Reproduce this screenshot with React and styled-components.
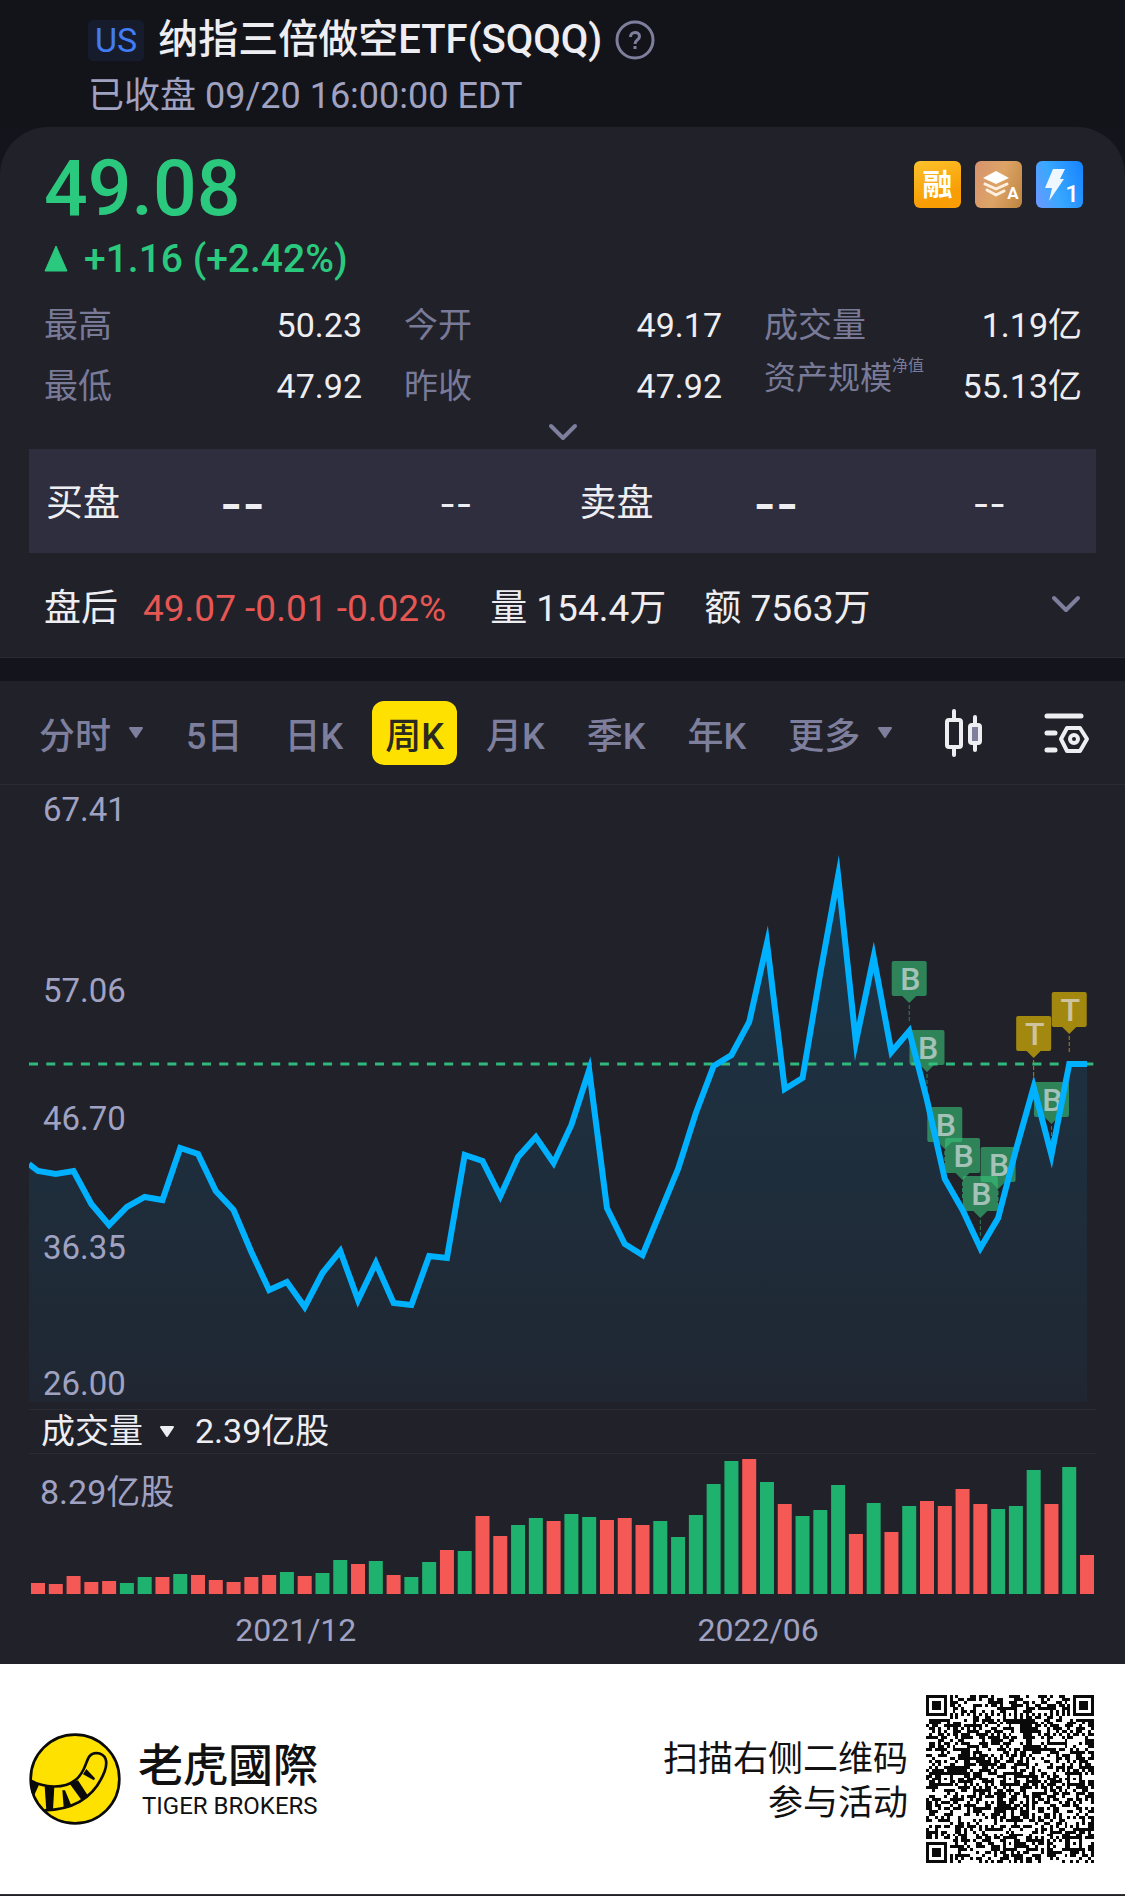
import React, { useState } from 'react';
import styled, { createGlobalStyle } from 'styled-components';

const GlobalStyle = createGlobalStyle`
    * {
        box-sizing: border-box;
    }

    body {
        margin: 0;
        background-color: #21212a;
        font-family: Roboto, "Noto Sans CJK SC", sans-serif;
        color: #eeeef2;
    }

    button {
        padding: 0;
        border: none;
        background: none;
        color: inherit;
        font: inherit;
        cursor: pointer;
    }

    svg {
        display: block;
    }
`;

const Page = styled.div`
    background-color: #14141c;
`;

const Header = styled.header`
    padding: 15px 88px 9px;
    background-color: #131419;
`;

const TitleRow = styled.div`
    display: flex;
    align-items: center;
    height: 50px;
`;

const Market = styled.span`
    padding: 0 7px;
    border-radius: 5px;
    background-color: #171c2d;
    color: #427cf5;
    font-size: 34px;
    line-height: 41px;
`;

const Title = styled.h1`
    margin: 0 13px 0 14px;
    font-size: 40px;
    font-weight: 500;
    line-height: 50px;
`;

const Status = styled.p`
    margin: 9px 0 0;
    color: #a0a2c2;
    font-size: 36px;
    line-height: 44px;
`;

const QuoteCard = styled.section`
    padding-top: 22px;
    border-bottom: 1px solid #2b2b36;
    border-radius: 48px 48px 0 0;
    background-color: #21212a;
`;

const PriceRow = styled.div`
    display: flex;
    justify-content: space-between;
    align-items: flex-start;
    padding: 0 42px 0 44px;
`;

const Price = styled.div`
    color: #2bc97e;
    font-size: 77px;
    font-weight: 500;
    line-height: 80px;
`;

const Badges = styled.div`
    display: flex;
    gap: 14px;
    margin-top: 12px;
`;

const Badge = styled.button`
    width: 47px;
    height: 47px;
    border-radius: 6px;
    background: ${props => props.$fill};
    color: white;
    font-size: 30px;
    font-weight: 700;
    line-height: 47px;
    overflow: hidden;
`;

const Change = styled.div`
    display: flex;
    align-items: center;
    gap: 16px;
    margin-top: 6px;
    padding: 0 44px;
    color: #2bc97e;
    font-size: 39px;
    font-weight: 500;
    line-height: 48px;
`;

const Stats = styled.dl`
    display: grid;
    grid-template-columns: repeat(3, 1fr);
    column-gap: 42px;
    margin: 12px 0 0;
    padding: 0 43px 0 44px;
`;

const Stat = styled.div`
    display: flex;
    justify-content: space-between;
    font-size: 34px;
    line-height: 61px;
    white-space: nowrap;

    dt {
        color: #787a98;
    }

    dd {
        margin: 0;
    }
`;

const SmallTerm = styled.dt`
    display: flex;
    align-items: flex-start;
    font-size: 32px;
    line-height: 44px;

    sup {
        font-size: 16px;
        line-height: 20px;
    }
`;

const ExpandBtn = styled.button`
    display: flex;
    justify-content: center;
    align-items: center;
    width: 100%;
    height: 32px;
`;

const Depth = styled.div`
    display: grid;
    grid-template-columns: 1fr 1fr;
    margin: 0 29px;
    padding-top: 6px;
    background-color: #2e2e3e;
`;

const DepthSide = styled.div`
    display: grid;
    grid-template-columns: 1fr 2fr 2fr;
    font-size: 37px;
    line-height: 98px;
    text-align: center;

    span:first-child {
        padding-left: 17px;
        text-align: left;
        white-space: nowrap;
    }
`;

const Dashes = styled.span`
    font-family: Inter, sans-serif;
    font-size: ${props => props.$strong ? '48px' : '36px'};
    font-weight: ${props => props.$strong ? 600 : 400};
`;

const AfterHours = styled.div`
    display: flex;
    align-items: center;
    padding: 0 44px;
    font-size: 37px;
    line-height: 97px;
`;

const AfterText = styled.span`
    padding-top: 7px;
    margin-right: ${props => props.$gap};
    color: ${props => props.$loss ? '#e65754' : 'inherit'};
    white-space: nowrap;
`;

const AfterToggle = styled.button`
    margin-left: auto;
`;

const Divider = styled.div`
    height: 23px;
`;

const ChartCard = styled.section`
    background-color: #21212a;
`;

const Toolbar = styled.nav`
    display: flex;
    align-items: center;
    gap: 16px;
    height: 104px;
    padding: 0 34px 0 26px;
    border-bottom: 1px solid #2b2b36;
`;

const Tab = styled.button`
    display: flex;
    align-items: center;
    gap: 17px;
    height: 64px;
    padding: 0 13px;
    border-radius: 12px;
    background-color: ${props => props.$active ? '#ffe100' : 'transparent'};
    color: ${props => props.$active ? '#2a2a20' : '#7d7f9d'};
    font-size: 36px;
    font-weight: 500;
    white-space: nowrap;
`;

const Tools = styled.div`
    display: flex;
    justify-content: space-between;
    flex: 1;
    padding-left: 22px;
`;

const Plot = styled.div`
    margin: 0 29px;

    svg {
        width: 100%;
        height: auto;
    }
`;

const VolumeHead = styled.div`
    display: flex;
    align-items: center;
    gap: 20px;
    height: 45px;
    margin: 0 29px;
    padding-left: 12px;
    border-top: 1px solid #2b2b36;
    border-bottom: 1px solid #2b2b36;
    font-size: 34px;
    line-height: 43px;
`;

const VolumeSelect = styled.button`
    display: flex;
    align-items: center;
    gap: 16px;
`;

const Dates = styled.div`
    display: grid;
    grid-template-columns: repeat(60, 1fr);
    margin: 0 29px;
    padding-top: 2px;
    color: #a0a2c2;
    font-size: 32px;
    line-height: 68px;
    text-align: center;
`;

const DateTick = styled.span`
    grid-column: ${props => props.$start} / span 10;
`;

const Footer = styled.footer`
    display: flex;
    justify-content: space-between;
    align-items: center;
    padding: 31px 31px 31px 29px;
    border-bottom: 1px solid #333336;
    background-color: white;
    color: #111111;
`;

const Brand = styled.div`
    display: flex;
    align-items: center;
    gap: 17px;
`;

const BrandText = styled.div`
    padding-top: 4px;
`;

const BrandName = styled.div`
    font-family: Roboto, "Noto Sans CJK TC", sans-serif;
    font-size: 45px;
    font-weight: 500;
    line-height: 50px;
`;

const BrandLatin = styled.div`
    padding-left: 4px;
    font-size: 24px;
    line-height: 28px;
`;

const Invite = styled.div`
    display: flex;
    align-items: center;
    gap: 18px;
    font-size: 35px;
    line-height: 44px;
    text-align: right;
`;

const InviteText = styled.p`
    margin: 0;
    padding-top: 5px;
`;

const stats = [
    { label: '最高', value: '50.23' },
    { label: '今开', value: '49.17' },
    { label: '成交量', value: '1.19亿' },
    { label: '最低', value: '47.92' },
    { label: '昨收', value: '47.92' },
    { label: '资产规模', note: '净值', value: '55.13亿' },
];

const tabs = ['分时', '5日', '日K', '周K', '月K', '季K', '年K', '更多'];
const menus = ['分时', '更多'];

const priceLabels = [
    { y: 24, text: '67.41' },
    { y: 205, text: '57.06' },
    { y: 333, text: '46.70' },
    { y: 462, text: '36.35' },
    { y: 598, text: '26.00' },
];

const closes = [
    386, 389, 386, 419, 440, 422, 412, 415, 363, 369, 406, 425, 467, 505, 497,
    522, 488, 466, 515, 478, 518, 520, 471, 473, 370, 376, 411, 372, 352, 378,
    340, 285, 423, 459, 470, 427, 384, 328, 281, 270, 237, 158, 304, 293, 188,
    91, 257, 172, 267, 246, 315, 394, 425, 463, 433, 365, 302, 370, 279, 279,
];

const marks = [
    { week: 49, y: 218, type: 'B' },
    { week: 50, y: 287, type: 'B' },
    { week: 51, y: 364, type: 'B' },
    { week: 52, y: 395, type: 'B' },
    { week: 54, y: 404, type: 'B' },
    { week: 53, y: 433, type: 'B' },
    { week: 56, y: 273, type: 'T' },
    { week: 57, y: 339, type: 'B' },
    { week: 58, y: 249, type: 'T' },
];

const volumes = [
    11, 10, 18, 12, 13, 11, 17, 17, 20, 19, 14, 12, 17, 19, 22,
    18, 21, 34, 30, 33, 19, 17, 32, 44, 43, 78, 58, 69, 76, 73,
    80, 77, 74, 76, 69, 73, 57, 79, 110, 133, 135, 112, 90, 78, 84,
    109, 60, 91, 62, 88, 93, 88, 105, 90, 85, 88, 124, 90, 127, 39,
];
const volumeSides = 'rrrrrggrgrrrrrgrggrgrggrgrrggrggrrrgggggrgrgggrgrgrrrrgggrgr';

const weekX = i => 9 + i * 17.78;

const Chevron = () => (
    <svg width="30" height="20" viewBox="0 0 30 20" fill="none" stroke="#7d7f9d" strokeWidth="4" strokeLinecap="round" strokeLinejoin="round">
        <path d="M3 3 L15 15 L27 3" />
    </svg>
);

const Triangle = ({ color }) => (
    <svg width="16" height="12" viewBox="0 0 16 12">
        <path d="M2 1 H14 L8 10 Z" fill={color} stroke={color} strokeWidth="2" strokeLinejoin="round" />
    </svg>
);

const PriceChart = () => {
    const points = closes.map((y, i) => `${weekX(i)},${y}`).join(' ');
    return (
        <svg viewBox="0 0 1067 624" role="img" aria-label="周K">
            <defs>
                <linearGradient id="area" x1="0" y1="0" x2="0" y2="1">
                    <stop offset="0" stopColor="#00b4ff" stopOpacity="0.14" />
                    <stop offset="1" stopColor="#00b4ff" stopOpacity="0.04" />
                </linearGradient>
            </defs>
            <polygon points={`0,617 0,379 ${points} ${weekX(59)},617`} fill="url(#area)" />
            <line x1="0" x2="1065" y1="279" y2="279" stroke="#2fb97d" strokeWidth="3" strokeDasharray="9 8.3" />
            {marks.map(mark => (
                <g key={mark.week} transform={`translate(${weekX(mark.week)} ${mark.y})`}>
                    <path
                        d="M-15.500 -42 H15.500 Q17.500 -42 17.500 -40 V-9 Q17.500 -7 15.500 -7 H7 L0 0 L-7 -7 H-15.500 Q-17.500 -7 -17.500 -9 V-40 Q-17.500 -42 -15.500 -42 Z"
                        fill={mark.type === 'B' ? '#37c47a' : '#facd00'}
                        opacity="0.6"
                    />
                    <line y1="2" y2="20" stroke={mark.type === 'B' ? '#2e835a' : '#a38810'} strokeDasharray="4 2" />
                    <text x="1" y="-13" fontSize="32" fontWeight="500" fill="#e4e4ec" opacity="0.65" textAnchor="middle">{mark.type}</text>
                </g>
            ))}
            <polyline points={`0,379 ${points}`} fill="none" stroke="#00b1ff" strokeWidth="6" strokeMiterlimit="20" />
            {priceLabels.map(label => (
                <text key={label.text} x="14" y={label.y + 12} fontSize="33" fill="#a0a2c2">{label.text}</text>
            ))}
        </svg>
    );
};

const VolumeChart = () => (
    <svg viewBox="0 0 1067 140" role="img" aria-label="成交量">
        {volumes.map((height, i) => (
            <rect
                key={i}
                x={weekX(i) - 7}
                y={140 - height}
                width="14"
                height={height}
                fill={volumeSides[i] === 'g' ? '#1fb16e' : '#f45956'}
            />
        ))}
        <text x="11" y="50" fontSize="34" fill="#a0a2c2">8.29亿股</text>
    </svg>
);

const QR_SIZE = 57;

const inBox = (x, y, left, top, size) => x >= left && x < left + size && y >= top && y < top + size;

// concentric squares around a centre: finder (radius 3) or alignment (radius 2)
const ring = (x, y, cx, cy) => Math.max(Math.abs(x - cx), Math.abs(y - cy));

const qrModules = () => {
    let seed = 20220920;
    let path = '';
    const finders = [[3, 3], [QR_SIZE - 4, 3], [3, QR_SIZE - 4]];
    const aligns = [[28, 6], [6, 28], [28, 28], [50, 28], [28, 50], [50, 50]];
    for (let y = 0; y < QR_SIZE; y++) {
        for (let x = 0; x < QR_SIZE; x++) {
            seed = (seed * 1103515245 + 12345) % 2147483648;
            let dark = seed / 2147483648 < 0.5;
            if (x === 6 || y === 6) dark = (x + y) % 2 === 0;
            aligns.forEach(([cx, cy]) => {
                if (ring(x, y, cx, cy) <= 2) dark = ring(x, y, cx, cy) !== 1;
            });
            finders.forEach(([cx, cy]) => {
                if (inBox(x, y, cx - 4, cy - 4, 9)) dark = ring(x, y, cx, cy) < 2 || ring(x, y, cx, cy) === 3;
            });
            if (dark) path += `M${x} ${y}h1v1h-1z`;
        }
    }
    return path;
};

const qrPath = qrModules();

const TigerLogo = () => (
    <svg width="92" height="92" viewBox="0 0 276 276">
        <circle cx="138" cy="138" r="133" fill="#ffe100" stroke="#0a0a0a" strokeWidth="8" />
        <g fill="#0a0a0a">
            <path d="M4 142 L30 155 L15 188 L8 180 Z" />
            <path d="M47 160 L76 161 L72 231 L52 232 Z" />
            <path d="M100 172 L108 172 L126 215 L104 222 Z" />
            <path d="M122 152 L147 142 L178 190 L158 202 Z" />
            <path d="M162 124 L172 108 L198 136 L195 142 Z" />
        </g>
        <path
            d="M4 142 C45 165 105 168 138 142 C180 112 165 60 202 60 C232 62 237 86 227 115 C198 190 140 230 46 232"
            fill="none"
            stroke="#0a0a0a"
            strokeWidth="8"
        />
    </svg>
);

const App = () => {
    const [active, setActive] = useState('周K');

    return (
        <Page>
            <GlobalStyle />
            <Header>
                <TitleRow>
                    <Market>US</Market>
                    <Title>纳指三倍做空ETF(SQQQ)</Title>
                    <button aria-label="帮助">
                        <svg width="40" height="40" viewBox="0 0 40 40" fill="none" stroke="#7d7f9d" strokeWidth="3">
                            <circle cx="20" cy="20" r="18" />
                            <path d="M15.500 17 C15.500 11 24.500 11 24.500 16.500 C24.500 20 20 20 20 24" />
                            <path d="M20 26 V29" />
                        </svg>
                    </button>
                </TitleRow>
                <Status>已收盘 09/20 16:00:00 EDT</Status>
            </Header>

            <QuoteCard>
                <PriceRow>
                    <Price>49.08</Price>
                    <Badges>
                        <Badge $fill="linear-gradient(160deg, #fcc32c, #f99d05 70%)">融</Badge>
                        <Badge $fill="linear-gradient(110deg, #d6936f, #dda466 50%, #bd8440)" aria-label="A">
                            <svg width="47" height="47" viewBox="0 0 47 47">
                                <path d="M21 10 L34 17 L21 23 L8 17 Z" fill="white" />
                                <path d="M10 23 L21 28 L32 23 M12 29 L21 34 L29 30" fill="none" stroke="#fff0e2" strokeWidth="3" strokeLinecap="round" strokeLinejoin="round" />
                                <text x="38" y="38" fontSize="17" fill="white" textAnchor="middle">A</text>
                            </svg>
                        </Badge>
                        <Badge $fill="linear-gradient(70deg, #6d97ff, #39a8ff 40%, #1683ff)" aria-label="1">
                            <svg width="47" height="47" viewBox="0 0 47 47">
                                <path d="M17 8 H29 L24 18 H28 L13 40 L16 27 H9 Z" fill="#eef7ff" />
                                <text x="36" y="41" fontSize="24" fontWeight="500" fill="white" textAnchor="middle">1</text>
                            </svg>
                        </Badge>
                    </Badges>
                </PriceRow>
                <Change>
                    <svg width="24" height="28" viewBox="0 0 24 28">
                        <path d="M12 1 L23 26 H1 Z" fill="#2bc97e" stroke="#2bc97e" strokeLinejoin="round" />
                    </svg>
                    +1.16 (+2.42%)
                </Change>
                <Stats>
                    {stats.map(stat => (
                        <Stat key={stat.label}>
                            {stat.note
                                ? <SmallTerm>{stat.label}<sup>{stat.note}</sup></SmallTerm>
                                : <dt>{stat.label}</dt>}
                            <dd>{stat.value}</dd>
                        </Stat>
                    ))}
                </Stats>
                <ExpandBtn aria-label="展开"><Chevron /></ExpandBtn>
                <Depth>
                    {['买盘', '卖盘'].map(side => (
                        <DepthSide key={side}>
                            <span>{side}</span>
                            <Dashes $strong>--</Dashes>
                            <Dashes>--</Dashes>
                        </DepthSide>
                    ))}
                </Depth>
                <AfterHours>
                    <AfterText $gap="25px">盘后</AfterText>
                    <AfterText $gap="44px" $loss>49.07 -0.01 -0.02%</AfterText>
                    <AfterText $gap="38px">量 154.4万</AfterText>
                    <AfterText $gap="38px">额 7563万</AfterText>
                    <AfterToggle aria-label="展开盘后"><Chevron /></AfterToggle>
                </AfterHours>
            </QuoteCard>

            <Divider />

            <ChartCard>
                <Toolbar>
                    {tabs.map(tab => (
                        <Tab key={tab} $active={tab === active} onClick={() => setActive(tab)}>
                            {tab}
                            {menus.includes(tab) && <Triangle color="#7d7f9d" />}
                        </Tab>
                    ))}
                    <Tools>
                        <button aria-label="图表类型">
                            <svg width="40" height="50" viewBox="0 0 40 50" fill="none" stroke="#eeeef2" strokeWidth="4" strokeLinecap="round" strokeLinejoin="round">
                                <rect x="3" y="12" width="14" height="27" rx="2" />
                                <path d="M10 3 V12 M10 39 V47 M31 9 V16 M31 36 V42" />
                                <rect x="26" y="17" width="10" height="18" rx="2" fill="#7d7f9d" />
                            </svg>
                        </button>
                        <button aria-label="图表设置">
                            <svg width="48" height="50" viewBox="0 0 48 50" fill="none" stroke="#eeeef2" strokeLinecap="round" strokeLinejoin="round">
                                <path d="M4 8 H38 M4 25 H12 M4 42 H12" strokeWidth="5" />
                                <path d="M24 20 H37 L44 31 L37 43 H24 L18 31 Z" strokeWidth="4" />
                                <circle cx="31" cy="31" r="4" strokeWidth="4" />
                            </svg>
                        </button>
                    </Tools>
                </Toolbar>
                <Plot><PriceChart /></Plot>
                <VolumeHead>
                    <VolumeSelect>成交量 <Triangle color="#eeeef2" /></VolumeSelect>
                    <span>2.39亿股</span>
                </VolumeHead>
                <Plot><VolumeChart /></Plot>
                <Dates>
                    <DateTick $start={11}>2021/12</DateTick>
                    <DateTick $start={37}>2022/06</DateTick>
                </Dates>
            </ChartCard>

            <Footer>
                <Brand>
                    <TigerLogo />
                    <BrandText>
                        <BrandName>老虎國際</BrandName>
                        <BrandLatin>TIGER BROKERS</BrandLatin>
                    </BrandText>
                </Brand>
                <Invite>
                    <InviteText>
                        扫描右侧二维码<br />
                        参与活动
                    </InviteText>
                    <svg width="168" height="168" viewBox="0 0 57 57" shapeRendering="crispEdges" role="img" aria-label="二维码">
                        <path d={qrPath} fill="#0a0a0a" />
                    </svg>
                </Invite>
            </Footer>
        </Page>
    );
};

export default App;
